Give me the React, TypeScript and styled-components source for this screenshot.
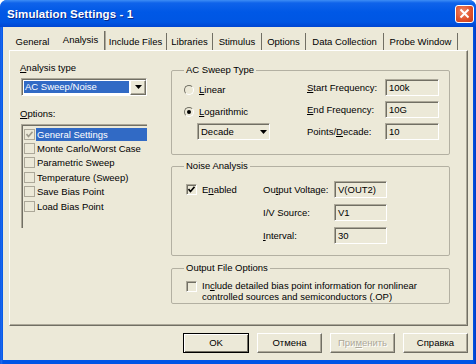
import React from "react";
import styled, { createGlobalStyle, css } from "styled-components";

const face = "#ECE9D8";
const shade = "#ACA899";
const dark = "#716F64";
const select = "#316AC5";

const tabs = [
  { name: "General", width: 48 },
  { name: "Analysis", width: 48, active: true },
  { name: "Include Files", width: 62 },
  { name: "Libraries", width: 46 },
  { name: "Stimulus", width: 49 },
  { name: "Options", width: 44 },
  { name: "Data Collection", width: 78 },
  { name: "Probe Window", width: 74 },
];

const options = [
  "General Settings",
  "Monte Carlo/Worst Case",
  "Parametric Sweep",
  "Temperature (Sweep)",
  "Save Bias Point",
  "Load Bias Point",
];

const GlobalStyle = createGlobalStyle`
  html, body {
    margin: 0;
    padding: 0;
    background: #fff;
  }
  body {
    font-family: "Liberation Sans", Arial, sans-serif;
    font-size: 9.5px;
    color: #000;
  }
`;

const sunken = css`
  border: 1px solid;
  border-color: ${shade} #fff #fff ${shade};
  box-shadow: inset 1px 1px ${dark};
`;

const raised = css`
  border: 1px solid;
  border-color: #fff ${dark} ${dark} #fff;
  box-shadow: inset -1px -1px ${shade};
`;

const Window = styled.div`
  width: 476px;
  height: 364px;
  display: flex;
  flex-direction: column;
  background: linear-gradient(90deg, #0a4fd8 0, #1f6cf2 1px, #0055e5 3px, #0055e5 473px, #003cc4 476px);
  border-radius: 7px 7px 0 0;
  overflow: hidden;
`;

const TitleBar = styled.div`
  height: 27px;
  flex: none;
  display: flex;
  align-items: center;
  justify-content: space-between;
  padding: 0 2px 0 7px;
  background: linear-gradient(
    180deg,
    #3d8df5 0,
    #0f63ea 3px,
    #0058e6 12px,
    #0056e3 22px,
    #0046d2 27px
  );
`;

const Title = styled.span`
  color: #fff;
  font-weight: bold;
  font-size: 11.5px;
  letter-spacing: 0.1px;
  text-shadow: 1px 1px #0a2a8a;
  white-space: nowrap;
`;

const CloseButton = styled.div`
  width: 19px;
  height: 18px;
  box-sizing: border-box;
  border: 1px solid #fff;
  border-radius: 3px;
  background: radial-gradient(circle at 40% 35%, #f08a6c 0, #e0532d 55%, #c63d1b 100%);
  display: grid;
  place-items: center;
`;

const Body = styled.div`
  flex: 1;
  display: flex;
  flex-direction: column;
  margin: 0 3px 4px;
  padding: 0 5px 0 6px;
  background: ${face};
`;

const TabStrip = styled.div`
  flex: none;
  height: 19px;
  margin-top: 4px;
  display: flex;
  align-items: flex-end;
`;

const Tab = styled.div<{ $w: number; $active?: boolean; $sep?: boolean }>`
  width: ${(p) => p.$w}px;
  height: ${(p) => (p.$active ? 19 : 17)}px;
  line-height: 18px;
  box-sizing: border-box;
  text-align: center;
  white-space: nowrap;
  border-right: 1px solid ${(p) => (p.$sep ? dark : "transparent")};
  ${(p) =>
    p.$active &&
    css`
      box-shadow: 1px 0 ${shade};
    `}
`;

const Panel = styled.div`
  flex: none;
  height: 276px;
  box-sizing: border-box;
  display: flex;
  border-top: 1px solid #fff;
  border-left: 1px solid #fff;
  border-right: 1px solid ${dark};
  border-bottom: 1px solid ${dark};
  box-shadow: inset -1px -1px ${shade};
  padding: 11px 0 0 10px;
`;

const LeftCol = styled.div`
  width: 127px;
  display: flex;
  flex-direction: column;
`;

const FieldLabel = styled.div<{ $gap?: number }>`
  line-height: 12px;
  margin-top: ${(p) => p.$gap ?? 0}px;
  white-space: nowrap;
`;

const U = styled.span`
  text-decoration: underline;
`;

const Combo = styled.div`
  ${sunken};
  margin: 4px 0 0 1px;
  width: 126px;
  height: 18px;
  box-sizing: border-box;
  background: #fff;
  display: flex;
  align-items: center;
  padding: 1px 0 1px 2px;
`;

const ComboText = styled.div`
  flex: 1;
  height: 12px;
  line-height: 12px;
  padding-left: 1px;
  background: ${select};
  color: #fff;
  white-space: nowrap;
`;

const DropButton = styled.div`
  ${raised};
  width: 16px;
  height: 15px;
  box-sizing: border-box;
  margin-left: 1px;
  background: ${face};
  display: grid;
  place-items: center;
`;

const ListBox = styled.div`
  margin: 4px 0 0 1px;
  width: 126px;
  height: 104px;
  box-sizing: border-box;
  border-top: 1px solid ${shade};
  border-left: 1px solid ${shade};
  box-shadow: inset 1px 1px ${dark};
  padding: 2px 0 0 1px;
`;

const ListItem = styled.div`
  height: 14.4px;
  display: flex;
  align-items: center;
  gap: 1px;
`;

const ListCheck = styled.div`
  width: 11px;
  height: 11px;
  box-sizing: border-box;
  margin-left: 1px;
  border: 1px solid ${shade};
  display: grid;
  place-items: center;
`;

const ListText = styled.div<{ $selected?: boolean }>`
  flex: 1;
  height: 13px;
  line-height: 13px;
  padding-left: 1px;
  white-space: nowrap;
  background: ${(p) => (p.$selected ? select : "transparent")};
  color: ${(p) => (p.$selected ? "#fff" : "#000")};
`;

const RightCol = styled.div`
  width: 279px;
  margin-left: 24px;
  display: flex;
  flex-direction: column;
`;

const Group = styled.fieldset<{ $top: number; $pad: string }>`
  margin: ${(p) => p.$top}px 0 0;
  padding: ${(p) => p.$pad};
  border: 1px solid #b3b0a2;
  border-radius: 2px;
  min-width: 0;
`;

const Legend = styled.legend`
  padding: 0 2px;
  margin-left: 2px;
  line-height: 12px;
  white-space: nowrap;
`;

const AcGrid = styled.div`
  display: grid;
  grid-template-columns: 125px 78px 54px;
  grid-template-rows: repeat(3, 17px);
  row-gap: 5px;
  align-items: center;
`;

const NoiseGrid = styled.div`
  display: grid;
  grid-template-columns: 81px 71px 53px;
  grid-template-rows: repeat(3, 17px);
  row-gap: 6px;
  align-items: center;
`;

const RadioRow = styled.div`
  align-self: end;
  display: flex;
  align-items: center;
  gap: 5px;
  padding-left: 2px;
  line-height: 12px;
`;

const Radio = styled.div<{ $checked?: boolean }>`
  width: 10px;
  height: 10px;
  box-sizing: border-box;
  border-radius: 50%;
  border: 1px solid;
  border-color: ${dark} #fff #fff ${dark};
  display: grid;
  place-items: center;
  &::after {
    content: "";
    width: 4px;
    height: 4px;
    border-radius: 50%;
    background: ${(p) => (p.$checked ? "#000" : "transparent")};
  }
`;

const Select = styled.div`
  ${sunken};
  margin-left: 15px;
  width: 73px;
  height: 17px;
  box-sizing: border-box;
  display: flex;
  align-items: center;
  padding: 1px 2px 1px 3px;
`;

const SelectText = styled.div`
  flex: 1;
  line-height: 12px;
`;

const Label = styled.div`
  line-height: 12px;
  white-space: nowrap;
`;

const TextBox = styled.div`
  ${sunken};
  height: 17px;
  box-sizing: border-box;
  padding-left: 3px;
  line-height: 15px;
  white-space: nowrap;
`;

const CheckRow = styled.div<{ $top?: boolean }>`
  display: flex;
  align-items: ${(p) => (p.$top ? "flex-start" : "center")};
  gap: 5px;
  padding-left: 4px;
  line-height: ${(p) => (p.$top ? 11 : 12)}px;
  white-space: nowrap;
`;

const CheckBox = styled.div<{ $top?: boolean }>`
  ${sunken};
  flex: none;
  width: 11px;
  height: 11px;
  box-sizing: border-box;
  margin-top: ${(p) => (p.$top ? 1 : 0)}px;
  display: grid;
  place-items: center;
`;

const ButtonRow = styled.div`
  display: flex;
  justify-content: flex-end;
  gap: 8px;
  margin-top: 7px;
`;

const Button = styled.div<{ $default?: boolean; $disabled?: boolean }>`
  ${raised};
  width: ${(p) => (p.$default ? 66 : 65)}px;
  height: 20px;
  box-sizing: border-box;
  line-height: 18px;
  text-align: center;
  color: ${(p) => (p.$disabled ? shade : "#000")};
  text-shadow: ${(p) => (p.$disabled ? "1px 1px #fff" : "none")};
  ${(p) =>
    p.$default &&
    css`
      border-color: #000;
      box-shadow: inset 1px 1px #fff, inset -1px -1px ${dark};
    `}
`;

const Arrow = () => (
  <svg width="7" height="4" viewBox="0 0 7 4">
    <polygon points="0,0 7,0 3.5,4" fill="#000" />
  </svg>
);

const Tick = ({ color }: { color: string }) => (
  <svg width="7" height="7" viewBox="0 0 7 7">
    <polyline points="0.5,3 2.5,5.5 6.5,0.8" fill="none" stroke={color} strokeWidth="1.6" />
  </svg>
);

const App: React.FC = () => {
  return (
    <>
      <GlobalStyle />
      <Window>
        <TitleBar>
          <Title>Simulation Settings - 1</Title>
          <CloseButton>
            <svg width="11" height="11" viewBox="0 0 11 11">
              <path d="M1.5 1.5 L9.5 9.5 M9.5 1.5 L1.5 9.5" stroke="#fff" strokeWidth="2" />
            </svg>
          </CloseButton>
        </TitleBar>
        <Body>
          <TabStrip>
            {tabs.map((t, i) => (
              <Tab key={t.name} $w={t.width} $active={t.active} $sep={i > 0}>
                {t.name}
              </Tab>
            ))}
          </TabStrip>
          <Panel>
            <LeftCol>
              <FieldLabel>
                <U>A</U>nalysis type
              </FieldLabel>
              <Combo>
                <ComboText>AC Sweep/Noise</ComboText>
                <DropButton>
                  <Arrow />
                </DropButton>
              </Combo>
              <FieldLabel $gap={12}>
                <U>O</U>ptions:
              </FieldLabel>
              <ListBox>
                {options.map((o, i) => (
                  <ListItem key={o}>
                    <ListCheck>{i === 0 && <Tick color="#9d9a8c" />}</ListCheck>
                    <ListText $selected={i === 0}>{o}</ListText>
                  </ListItem>
                ))}
              </ListBox>
            </LeftCol>
            <RightCol>
              <Group $top={2} $pad="3px 10px 14px">
                <Legend>AC Sweep Type</Legend>
                <AcGrid>
                  <RadioRow>
                    <Radio />
                    <span>
                      <U>L</U>inear
                    </span>
                  </RadioRow>
                  <Label>
                    <U>S</U>tart Frequency:
                  </Label>
                  <TextBox>100k</TextBox>
                  <RadioRow>
                    <Radio $checked />
                    <span>
                      <U>L</U>ogarithmic
                    </span>
                  </RadioRow>
                  <Label>
                    <U>E</U>nd Frequency:
                  </Label>
                  <TextBox>10G</TextBox>
                  <Select>
                    <SelectText>Decade</SelectText>
                    <Arrow />
                  </Select>
                  <Label>
                    Points/<U>D</U>ecade:
                  </Label>
                  <TextBox>10</TextBox>
                </AcGrid>
              </Group>
              <Group $top={5} $pad="9px 10px 11px">
                <Legend>Noise Analysis</Legend>
                <NoiseGrid>
                  <CheckRow>
                    <CheckBox>
                      <Tick color="#000" />
                    </CheckBox>
                    <span>
                      E<U>n</U>abled
                    </span>
                  </CheckRow>
                  <Label>
                    Ou<U>t</U>put Voltage:
                  </Label>
                  <TextBox>V(OUT2)</TextBox>
                  <span />
                  <Label>I/V Source:</Label>
                  <TextBox>V1</TextBox>
                  <span />
                  <Label>
                    <U>I</U>nterval:
                  </Label>
                  <TextBox>30</TextBox>
                </NoiseGrid>
              </Group>
              <Group $top={6} $pad="6px 10px 1px">
                <Legend>Output File Options</Legend>
                <CheckRow $top>
                  <CheckBox $top />
                  <span>
                    In<U>c</U>lude detailed bias point information for nonlinear
                    <br />
                    controlled sources and semiconductors (.OP)
                  </span>
                </CheckRow>
              </Group>
            </RightCol>
          </Panel>
          <ButtonRow>
            <Button $default>OK</Button>
            <Button>Отмена</Button>
            <Button $disabled>
              При<U>м</U>енить
            </Button>
            <Button>Справка</Button>
          </ButtonRow>
        </Body>
      </Window>
    </>
  );
};

export default App;
